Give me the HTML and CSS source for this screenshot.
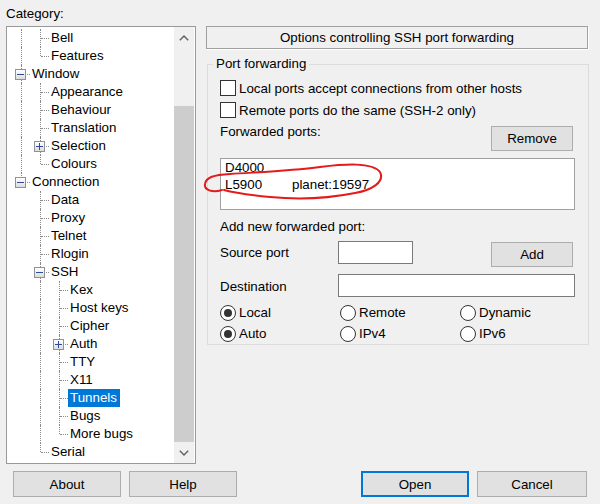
FILE: index.html
```html
<!DOCTYPE html>
<html>
<head>
<meta charset="utf-8">
<link rel="stylesheet" href="styles.css">
</head>
<body>
<div class="app">
  <div class="top">
    <div class="left">
      <div class="cat-label">Category:</div>
      <div class="tree">
        <div class="tree-items">
          <div class="row"><span class="g v"></span><span class="g t"></span><span class="lbl">Bell</span></div>
          <div class="row"><span class="g v"></span><span class="g l"></span><span class="lbl">Features</span></div>
          <div class="row"><span class="g t"><span class="exp"></span></span><span class="lbl">Window</span></div>
          <div class="row"><span class="g v"></span><span class="g t"></span><span class="lbl">Appearance</span></div>
          <div class="row"><span class="g v"></span><span class="g t"></span><span class="lbl">Behaviour</span></div>
          <div class="row"><span class="g v"></span><span class="g t"></span><span class="lbl">Translation</span></div>
          <div class="row"><span class="g v"></span><span class="g t"><span class="exp plus"></span></span><span class="lbl">Selection</span></div>
          <div class="row"><span class="g v"></span><span class="g l"></span><span class="lbl">Colours</span></div>
          <div class="row"><span class="g l"><span class="exp"></span></span><span class="lbl">Connection</span></div>
          <div class="row"><span class="g"></span><span class="g t"></span><span class="lbl">Data</span></div>
          <div class="row"><span class="g"></span><span class="g t"></span><span class="lbl">Proxy</span></div>
          <div class="row"><span class="g"></span><span class="g t"></span><span class="lbl">Telnet</span></div>
          <div class="row"><span class="g"></span><span class="g t"></span><span class="lbl">Rlogin</span></div>
          <div class="row"><span class="g"></span><span class="g t"><span class="exp"></span></span><span class="lbl">SSH</span></div>
          <div class="row"><span class="g"></span><span class="g v"></span><span class="g t"></span><span class="lbl">Kex</span></div>
          <div class="row"><span class="g"></span><span class="g v"></span><span class="g t"></span><span class="lbl">Host keys</span></div>
          <div class="row"><span class="g"></span><span class="g v"></span><span class="g t"></span><span class="lbl">Cipher</span></div>
          <div class="row"><span class="g"></span><span class="g v"></span><span class="g t"><span class="exp plus"></span></span><span class="lbl">Auth</span></div>
          <div class="row"><span class="g"></span><span class="g v"></span><span class="g t"></span><span class="lbl">TTY</span></div>
          <div class="row"><span class="g"></span><span class="g v"></span><span class="g t"></span><span class="lbl">X11</span></div>
          <div class="row"><span class="g"></span><span class="g v"></span><span class="g t"></span><span class="lbl sel">Tunnels</span></div>
          <div class="row"><span class="g"></span><span class="g v"></span><span class="g t"></span><span class="lbl">Bugs</span></div>
          <div class="row"><span class="g"></span><span class="g v"></span><span class="g l"></span><span class="lbl">More bugs</span></div>
          <div class="row"><span class="g"></span><span class="g l"></span><span class="lbl">Serial</span></div>
        </div>
        <div class="scrollbar">
          <div class="sb-btn"><svg width="10" height="6" viewBox="0 0 10 6"><path d="M0.8 5.2 L5 1 L9.2 5.2" fill="none" stroke="#606060" stroke-width="1.4"/></svg></div>
          <div class="sb-track"><div class="sb-thumb"></div></div>
          <div class="sb-btn"><svg width="10" height="6" viewBox="0 0 10 6"><path d="M0.8 0.8 L5 5 L9.2 0.8" fill="none" stroke="#606060" stroke-width="1.4"/></svg></div>
        </div>
      </div>
    </div>
    <div class="right">
      <div class="title-box">Options controlling SSH port forwarding</div>
      <fieldset class="group">
        <legend>Port forwarding</legend>
        <div class="group-body">
          <div class="check-row"><span class="checkbox"></span><span>Local ports accept connections from other hosts</span></div>
          <div class="check-row"><span class="checkbox"></span><span>Remote ports do the same (SSH-2 only)</span></div>
          <div class="fwd-row"><span class="fwd-label">Forwarded ports:</span><span class="btn small">Remove</span></div>
          <div class="listbox">
            <div class="li"><span class="c1">D4000</span></div>
            <div class="li"><span class="c1">L5900</span><span>planet:19597</span></div>
          </div>
          <div class="add-label">Add new forwarded port:</div>
          <div class="src-row"><span class="field-label">Source port</span><span class="input src"></span><span class="btn small add">Add</span></div>
          <div class="dst-row"><span class="field-label">Destination</span><span class="input dst"></span></div>
          <div class="radios">
            <div class="radio"><span class="circle on"></span><span>Local</span></div>
            <div class="radio"><span class="circle"></span><span>Remote</span></div>
            <div class="radio"><span class="circle"></span><span>Dynamic</span></div>
            <div class="radio"><span class="circle on"></span><span>Auto</span></div>
            <div class="radio"><span class="circle"></span><span>IPv4</span></div>
            <div class="radio"><span class="circle"></span><span>IPv6</span></div>
          </div>
        </div>
      </fieldset>
    </div>
  </div>
  <div class="buttons">
    <span class="btn big">About</span>
    <span class="btn big">Help</span>
    <span class="spacer"></span>
    <span class="btn big default">Open</span>
    <span class="btn big cancel">Cancel</span>
  </div>
  <svg class="annot" width="600" height="504" viewBox="0 0 600 504">
    <path d="M222 190 C212 193 204 190 205 184 C206 177 214 175 230 174 C260 172 290 171 320 167 C345 164 372 162 380 172 C385 182 372 190 355 193 C330 198 300 200 270 197 C250 195 235 193 224 190" fill="none" stroke="#e31b1b" stroke-width="2" stroke-linecap="round"/>
  </svg>
</div>
</body>
</html>
```

FILE: styles.css
```css
html, body {
  margin: 0;
  padding: 0;
  background: #f0f0f0;
}
body {
  width: 600px;
  height: 504px;
  overflow: hidden;
  font-family: "Liberation Sans", Arial, sans-serif;
  font-size: 13.33px;
  color: #000;
}
.app {
  position: relative;
  width: 600px;
  height: 504px;
  box-sizing: border-box;
  padding: 6px 0 0 6px;
}
.top {
  display: flex;
}
.left {
  width: 190px;
  flex: none;
}
.cat-label {
  line-height: 16px;
  height: 16px;
  margin-bottom: 4px;
}
.tree {
  height: 438px;
  box-sizing: border-box;
  border: 1px solid #999;
  background: #fff;
  display: flex;
}
.tree-items {
  flex: 1;
  padding: 2px 0 0 5px;
  overflow: hidden;
}
.row {
  display: flex;
  height: 18px;
  line-height: 18px;
  white-space: nowrap;
}
.g {
  width: 19px;
  height: 18px;
  flex: none;
  position: relative;
}
.g.v::before,
.g.t::before {
  content: "";
  position: absolute;
  left: 9px;
  top: 0;
  height: 18px;
  border-left: 1px dotted #8a8a8a;
}
.g.l::before {
  content: "";
  position: absolute;
  left: 9px;
  top: 0;
  height: 9px;
  border-left: 1px dotted #8a8a8a;
}
.g.t::after,
.g.l::after {
  content: "";
  position: absolute;
  left: 10px;
  top: 9px;
  width: 8px;
  border-top: 1px dotted #8a8a8a;
}
.exp {
  position: absolute;
  left: 3px;
  top: 4px;
  width: 11px;
  height: 11px;
  box-sizing: border-box;
  border: 1px solid #919191;
  background: linear-gradient(#ffffff, #dcdcdc);
  z-index: 1;
}
.exp::before {
  content: "";
  position: absolute;
  left: 1px;
  top: 4px;
  width: 7px;
  height: 1px;
  background: #2b4c9c;
}
.exp.plus::after {
  content: "";
  position: absolute;
  left: 4px;
  top: 1px;
  width: 1px;
  height: 7px;
  background: #2b4c9c;
}
.lbl {
  margin-left: -1px;
  padding: 0 3px 0 2px;
  height: 18px;
}
.lbl.sel {
  background: #0078d7;
  color: #fff;
}
.scrollbar {
  width: 20px;
  margin-right: 1px;
  flex: none;
  background: #f0f0f0;
  display: flex;
  flex-direction: column;
}
.sb-btn {
  height: 21px;
  flex: none;
  display: flex;
  align-items: center;
  justify-content: center;
}
.sb-track {
  flex: 1;
  display: flex;
  flex-direction: column;
  justify-content: flex-end;
}
.sb-thumb {
  height: 336px;
  background: #cdcdcd;
}
.right {
  margin-left: 10px;
  padding-top: 20px;
}
.title-box {
  width: 382px;
  height: 23px;
  box-sizing: border-box;
  border: 1px solid #a0a0a0;
  box-shadow: 1px 1px 0 #fff;
  text-align: center;
  line-height: 21px;
}
.group {
  margin: 7px 0 0 1px;
  width: 382px;
  box-sizing: border-box;
  border: 1px solid #dcdcdc;
  padding: 0;
  min-width: 0;
}
.group legend {
  margin-left: 5px;
  padding: 0 3px;
  line-height: 16px;
}
.group-body {
  padding: 5px 13px 0 12px;
}
.check-row {
  display: flex;
  align-items: center;
  height: 22px;
}
.checkbox {
  width: 16px;
  height: 16px;
  box-sizing: border-box;
  border: 1px solid #333;
  background: #fff;
  margin-right: 3px;
  flex: none;
}
.fwd-row {
  display: flex;
  justify-content: space-between;
  align-items: flex-start;
  height: 25px;
  margin-top: 5px;
}
.fwd-label {
  line-height: 16px;
  margin-top: -2px;
}
.btn {
  box-sizing: border-box;
  border: 1px solid #adadad;
  background: #e1e1e1;
  display: flex;
  align-items: center;
  justify-content: center;
  flex: none;
}
.btn.small {
  width: 82px;
  height: 25px;
  margin-right: 2px;
}
.listbox {
  margin-top: 7px;
  height: 52px;
  box-sizing: border-box;
  border: 1px solid #a0a0a0;
  background: #fff;
  padding-left: 4px;
}
.li {
  display: flex;
  line-height: 17px;
  height: 17px;
}
.li .c1 {
  width: 67px;
}
.add-label {
  margin-top: 9px;
  line-height: 16px;
}
.src-row {
  display: flex;
  align-items: flex-start;
  height: 26px;
  margin-top: 6px;
}
.field-label {
  width: 118px;
  flex: none;
  line-height: 16px;
  margin-top: 4px;
}
.input {
  height: 23px;
  box-sizing: border-box;
  border: 1px solid #7a7a7a;
  background: #fff;
  flex: none;
}
.input.src {
  width: 75px;
}
.btn.add {
  margin-left: auto;
  margin-top: 1px;
}
.dst-row {
  display: flex;
  align-items: flex-start;
  height: 23px;
  margin-top: 7px;
}
.dst-row .field-label {
  margin-top: 5px;
}
.input.dst {
  flex: 1;
}
.radios {
  margin-top: 5px;
  display: grid;
  grid-template-columns: 120px 120px 1fr;
  grid-auto-rows: 21px;
}
.radio {
  display: flex;
  align-items: center;
}
.circle {
  width: 16px;
  height: 16px;
  box-sizing: border-box;
  border: 1px solid #333;
  border-radius: 50%;
  background: #fff;
  margin-right: 3px;
  flex: none;
  display: flex;
  align-items: center;
  justify-content: center;
}
.circle.on::before {
  content: "";
  width: 8px;
  height: 8px;
  border-radius: 50%;
  background: #333;
}
.buttons {
  display: flex;
  margin-top: 7px;
  padding-left: 7px;
  width: 574px;
}
.btn.big {
  width: 108px;
  height: 26px;
}
.buttons .btn + .btn {
  margin-left: 8px;
}
.spacer {
  flex: 1;
}
.btn.default {
  border: 2px solid #0078d7;
}
.btn.cancel {
  width: 110px;
}
.annot {
  position: absolute;
  left: 0;
  top: 0;
  pointer-events: none;
}
```
